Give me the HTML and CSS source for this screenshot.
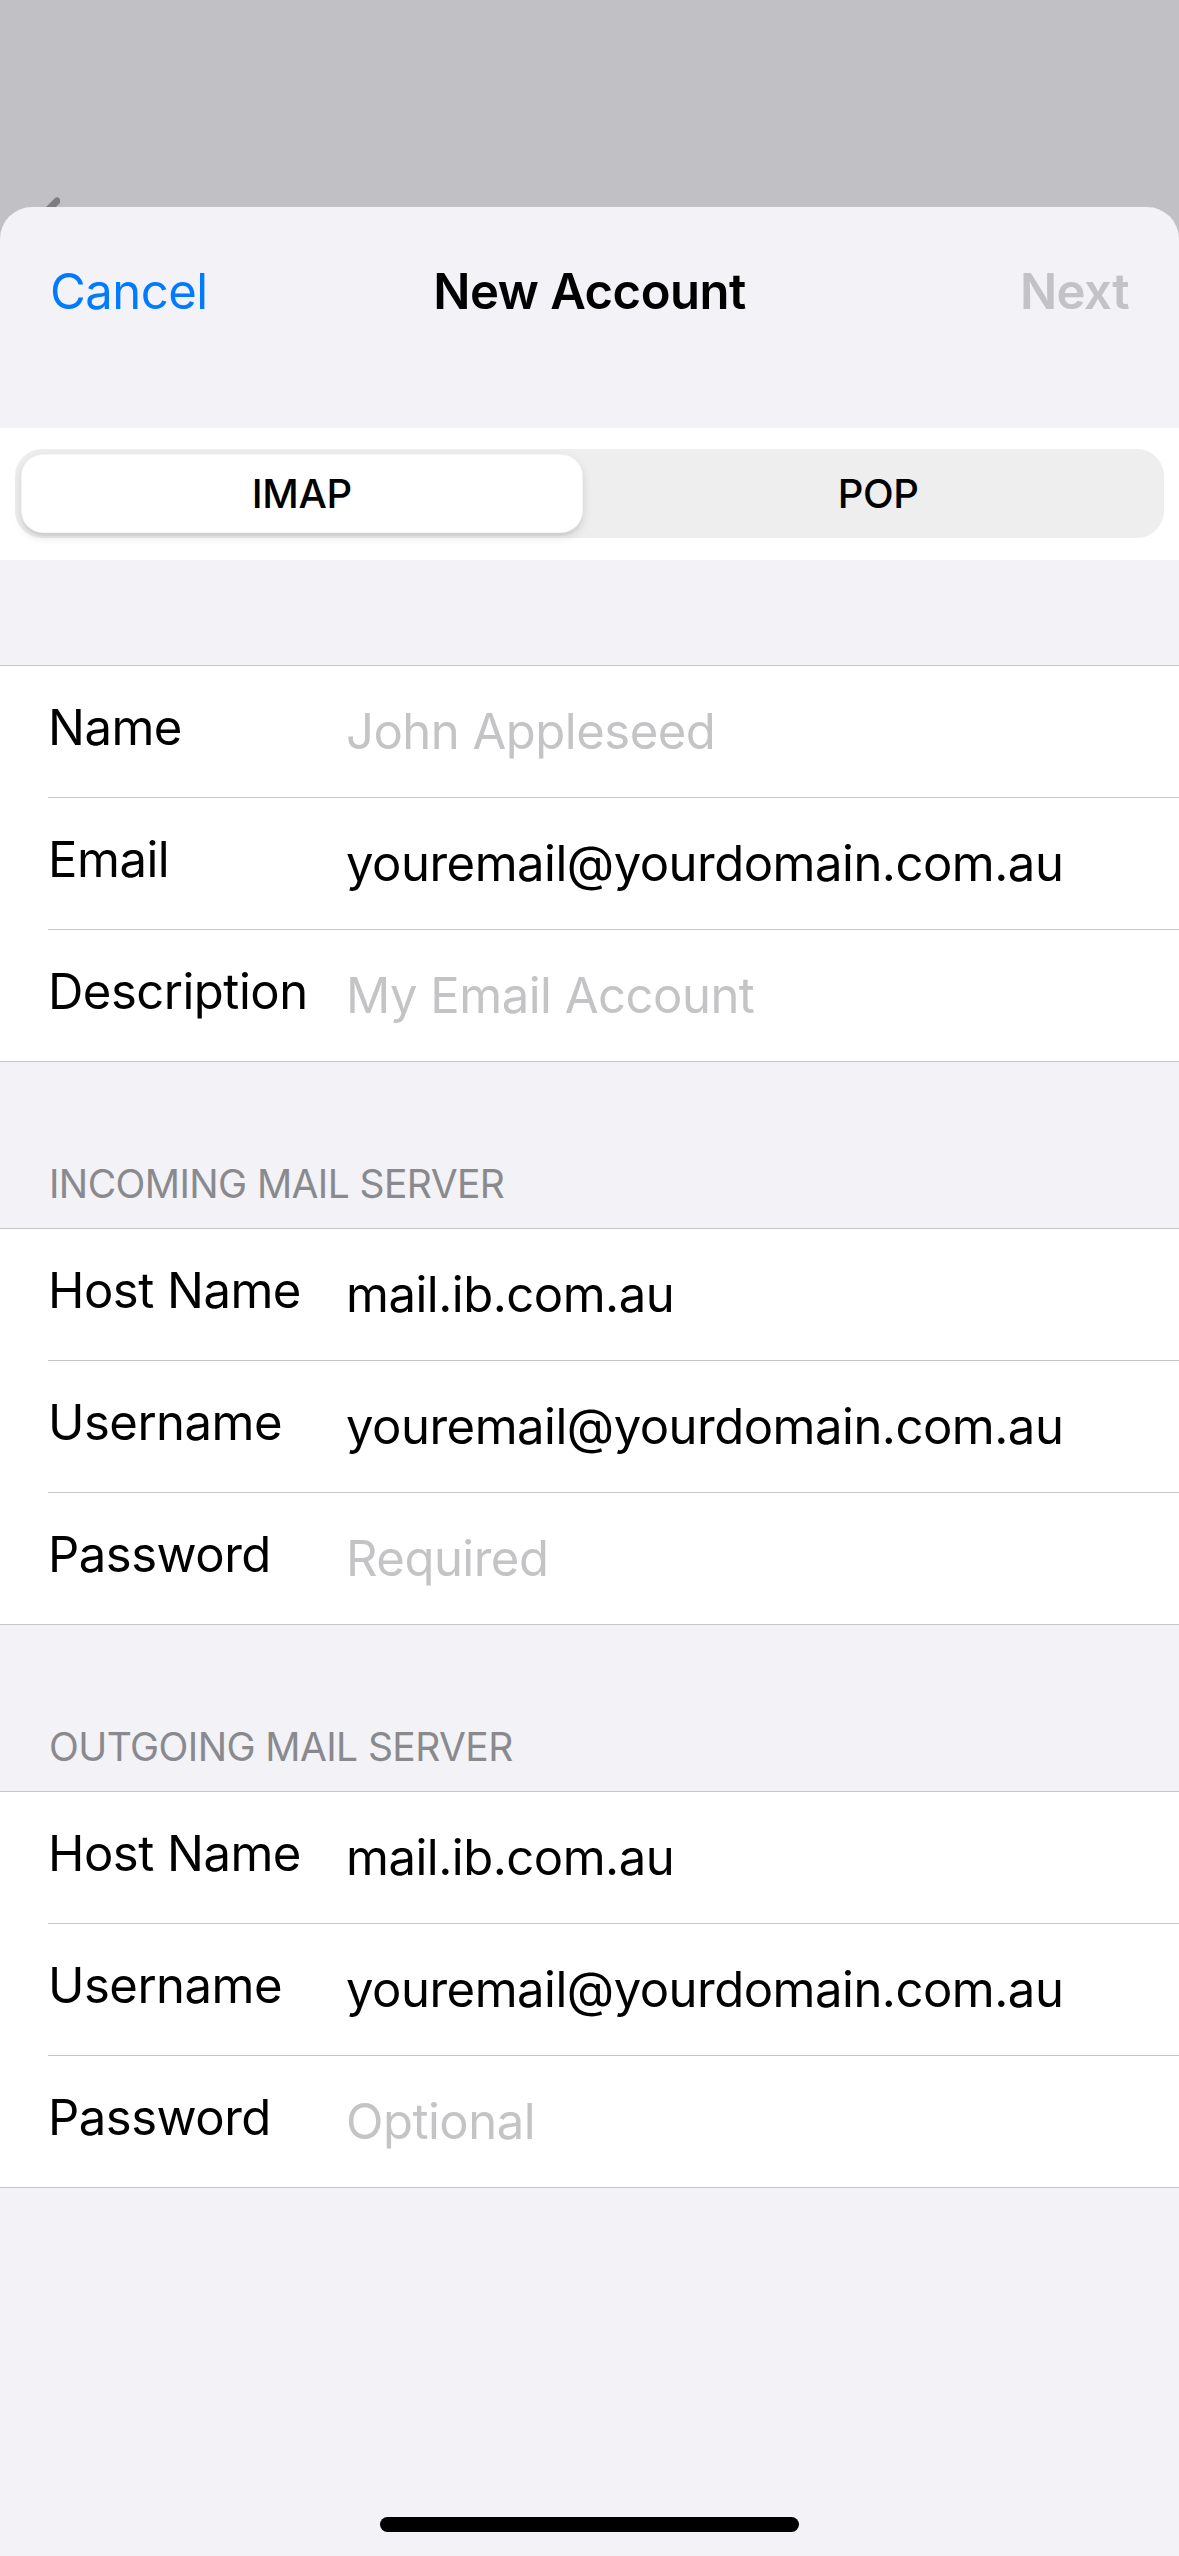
FILE: index.html
```html
<!DOCTYPE html>
<html>
<head>
<meta charset="UTF-8">
<title>New Account</title>
<link rel="stylesheet" href="styles.css">
</head>
<body>
<div class="backdrop">
	<!-- back chevron of the screen underneath, mostly hidden by the sheet -->
	<svg class="peek" width="30" height="30" viewBox="0 0 30 30">
		<path d="M27 11 L10 28" stroke="#7e7e81" stroke-width="7" stroke-linecap="round" fill="none"/>
	</svg>
</div>
<div class="sheet">
	<div class="nav">
		<span class="nav-btn cancel">Cancel</span>
		<span class="nav-title">New Account</span>
		<span class="nav-btn next">Next</span>
	</div>

	<div class="seg-band">
		<div class="seg">
			<div class="seg-item selected">IMAP</div>
			<div class="seg-item">POP</div>
		</div>
	</div>

	<div class="group first">
		<div class="row">
			<span class="label">Name</span>
			<span class="value placeholder">John Appleseed</span>
		</div>
		<div class="row">
			<span class="label">Email</span>
			<span class="value">youremail@yourdomain.com.au</span>
		</div>
		<div class="row">
			<span class="label">Description</span>
			<span class="value placeholder">My Email Account</span>
		</div>
	</div>

	<div class="section-title">INCOMING MAIL SERVER</div>
	<div class="group">
		<div class="row">
			<span class="label">Host Name</span>
			<span class="value">mail.ib.com.au</span>
		</div>
		<div class="row">
			<span class="label">Username</span>
			<span class="value">youremail@yourdomain.com.au</span>
		</div>
		<div class="row">
			<span class="label">Password</span>
			<span class="value placeholder">Required</span>
		</div>
	</div>

	<div class="section-title">OUTGOING MAIL SERVER</div>
	<div class="group">
		<div class="row">
			<span class="label">Host Name</span>
			<span class="value">mail.ib.com.au</span>
		</div>
		<div class="row">
			<span class="label">Username</span>
			<span class="value">youremail@yourdomain.com.au</span>
		</div>
		<div class="row">
			<span class="label">Password</span>
			<span class="value placeholder">Optional</span>
		</div>
	</div>

	<div class="home-area">
		<div class="home-bar"></div>
	</div>
</div>
</body>
</html>
```

FILE: styles.css
```css
body{
	margin:0;
	background-color:#c1c0c5;
	font-family:Inter, "Noto Sans", sans-serif;
	color:#000;
}
.backdrop{
	position:relative;
	height:207px;
}
.peek{
	position:absolute;
	left:30px;
	top:190px;
}
.sheet{
	position:relative;
	z-index:1;
	background-color:#f2f2f7;
	border-radius:32px 32px 0 0;
	height:2349px;
	display:flex;
	flex-direction:column;
}
.nav{
	display:grid;
	grid-template-columns:1fr auto 1fr;
	align-items:center;
	height:168px;
	padding:0 50px;
	margin-bottom:53px;
	font-size:49px;
	letter-spacing:-0.5px;
}
.cancel{
	color:#007aff;
}
.nav-title{
	font-weight:600;
}
.next{
	color:#c3c3c5;
	font-weight:600;
	text-align:right;
}
.seg-band{
	background-color:#fff;
	height:132px;
	padding:21px 15px 0;
	box-sizing:border-box;
}
.seg{
	display:flex;
	gap:16px;
	height:89px;
	padding:5px 6px;
	box-sizing:border-box;
	background-color:#eeeeef;
	border-radius:27px;
}
.seg-item{
	flex:1;
	display:flex;
	align-items:center;
	justify-content:center;
	font-size:40px;
	font-weight:500;
	letter-spacing:-0.4px;
	border-radius:22px;
}
.seg-item.selected{
	background-color:#fff;
	border:1.5px solid rgba(0,0,0,0.04);
	box-shadow:0 4px 10px rgba(0,0,0,0.12), 0 3px 1px rgba(0,0,0,0.04);
}
.group{
	background-color:#fff;
	border-top:1px solid #c6c6c8;
	border-bottom:1px solid #c6c6c8;
}
.group.first{
	margin-top:105px;
}
.row{
	display:flex;
	align-items:center;
	height:131px;
	box-sizing:border-box;
	padding-bottom:8px;
	margin-left:48px;
	font-size:49px;
	letter-spacing:-0.5px;
}
.row + .row{
	height:132px;
	border-top:1px solid #c6c6c8;
}
.label{
	width:298px;
	flex-shrink:0;
}
.value{
	margin-top:7px;
}
.placeholder{
	color:#c4c4c6;
}
.section-title{
	padding:98px 49px 21px;
	font-size:39px;
	line-height:47px;
	color:#8a8a8e;
	letter-spacing:-0.6px;
}
.home-area{
	margin-top:auto;
	height:39px;
	display:flex;
	justify-content:center;
}
.home-bar{
	width:419px;
	height:15px;
	border-radius:8px;
	background-color:#000;
}
```
